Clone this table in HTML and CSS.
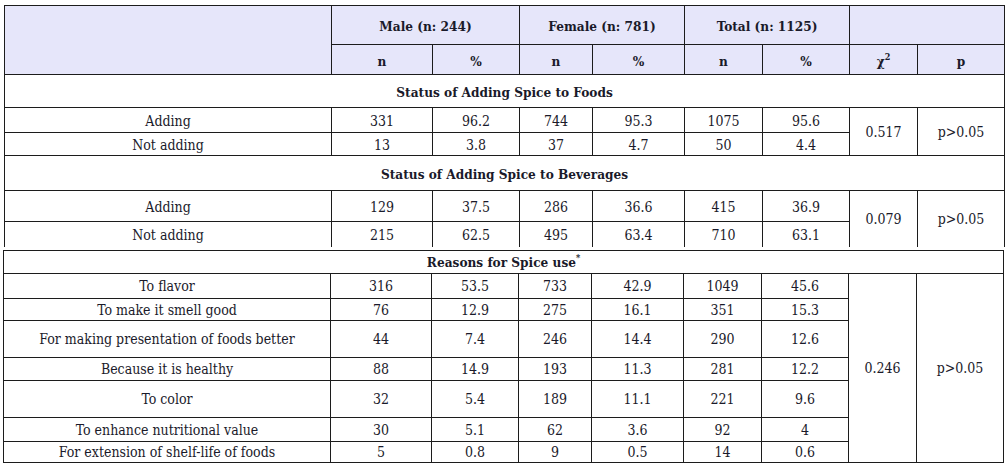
FILE: index.html
```html
<!DOCTYPE html>
<html>
<head>
<meta charset="utf-8">
<link rel="stylesheet" href="styles.css">
</head>
<body>
<div class="page">
<table class="tbl tbl-top">
  <colgroup>
    <col class="c-label"><col class="c-mn"><col class="c-mp"><col class="c-fn"><col class="c-fp"><col class="c-tn"><col class="c-tp"><col class="c-chi"><col class="c-p">
  </colgroup>
  <thead>
    <tr class="h1">
      <th rowspan="2"></th>
      <th colspan="2">Male (n: 244)</th>
      <th colspan="2">Female (n: 781)</th>
      <th colspan="2">Total (n: 1125)</th>
      <th colspan="2"></th>
    </tr>
    <tr class="h2">
      <th>n</th><th>%</th><th>n</th><th>%</th><th>n</th><th>%</th><th>χ<sup>2</sup></th><th>p</th>
    </tr>
  </thead>
  <tbody>
    <tr class="sec1"><td colspan="9" class="sec">Status of Adding Spice to Foods</td></tr>
    <tr class="r25"><td>Adding</td><td>331</td><td>96.2</td><td>744</td><td>95.3</td><td>1075</td><td>95.6</td><td rowspan="2">0.517</td><td rowspan="2">p&gt;0.05</td></tr>
    <tr class="r23"><td>Not adding</td><td>13</td><td>3.8</td><td>37</td><td>4.7</td><td>50</td><td>4.4</td></tr>
    <tr class="sec2"><td colspan="9" class="sec">Status of Adding Spice to Beverages</td></tr>
    <tr class="r31"><td>Adding</td><td>129</td><td>37.5</td><td>286</td><td>36.6</td><td>415</td><td>36.9</td><td rowspan="2" class="open">0.079</td><td rowspan="2" class="open">p&gt;0.05</td></tr>
    <tr class="r25 last"><td class="open">Not adding</td><td class="open">215</td><td class="open">62.5</td><td class="open">495</td><td class="open">63.4</td><td class="open">710</td><td class="open">63.1</td></tr>
  </tbody>
</table>
<table class="tbl tbl-bottom">
  <colgroup>
    <col class="c-label"><col class="c-mn"><col class="c-mp"><col class="c-fn"><col class="c-fp"><col class="c-tn"><col class="c-tp"><col class="c-chi"><col class="c-p">
  </colgroup>
  <tbody>
    <tr class="r23"><td colspan="9" class="sec">Reasons for Spice use<sup class="ast">*</sup></td></tr>
    <tr class="r25"><td>To flavor</td><td>316</td><td>53.5</td><td>733</td><td>42.9</td><td>1049</td><td>45.6</td><td rowspan="7">0.246</td><td rowspan="7">p&gt;0.05</td></tr>
    <tr class="r22"><td>To make it smell good</td><td>76</td><td>12.9</td><td>275</td><td>16.1</td><td>351</td><td>15.3</td></tr>
    <tr class="r37"><td>For making presentation of foods better</td><td>44</td><td>7.4</td><td>246</td><td>14.4</td><td>290</td><td>12.6</td></tr>
    <tr class="r23"><td>Because it is healthy</td><td>88</td><td>14.9</td><td>193</td><td>11.3</td><td>281</td><td>12.2</td></tr>
    <tr class="r37"><td>To color</td><td>32</td><td>5.4</td><td>189</td><td>11.1</td><td>221</td><td>9.6</td></tr>
    <tr class="r24"><td>To enhance nutritional value</td><td>30</td><td>5.1</td><td>62</td><td>3.6</td><td>92</td><td>4</td></tr>
    <tr class="r21"><td>For extension of shelf-life of foods</td><td>5</td><td>0.8</td><td>9</td><td>0.5</td><td>14</td><td>0.6</td></tr>
  </tbody>
</table>
</div>
</body>
</html>
```
FILE: styles.css
```css
html, body {
  margin: 0;
  padding: 0;
  background: #ffffff;
}
.page {
  padding: 5px 0 0 4px;
  font-family: "DejaVu Serif Condensed", "DejaVu Serif", serif;
  font-stretch: condensed;
  font-size: 14px;
  color: #1a1a2a;
}
.tbl {
  border-collapse: collapse;
  table-layout: fixed;
  width: 1001px;
}
.tbl th, .tbl td {
  border: 1px solid #1c1c1c;
  padding: 0;
  text-align: center;
  vertical-align: middle;
  line-height: 16px;
  font-weight: normal;
}
.tbl th {
  background: #e6e6fa;
  font-weight: bold;
  font-size: 13.5px;
  padding-top: 2px;
}
.c-label { width: 327px; }
.c-mn { width: 101px; }
.c-mp { width: 87px; }
.c-fn { width: 73px; }
.c-fp { width: 92px; }
.c-tn { width: 78px; }
.c-tp { width: 87px; }
.c-chi { width: 68px; }
.c-p { width: 87px; }

.tbl td.sec { font-weight: bold; font-size: 13.5px; }
.h1 { height: 39px; }
.h2 { height: 30px; }
.sec1 { height: 33px; }
.sec2 { height: 35px; }
.r21 { height: 21px; }
.r22 { height: 22px; }
.r23 { height: 23px; }
.r24 { height: 24px; }
.r25 { height: 25px; }
.r31 { height: 31px; }
.r37 { height: 37px; }
.tbl td { padding-top: 1px; }
.tbl td.open { border-bottom: 0; }
.tbl-bottom {
  margin-top: 3px;
  margin-left: -1px;
}
sup {
  font-size: 9px;
  line-height: 0;
  vertical-align: 6px;
}
.ast { font-size: 9px; font-weight: bold; }
```
